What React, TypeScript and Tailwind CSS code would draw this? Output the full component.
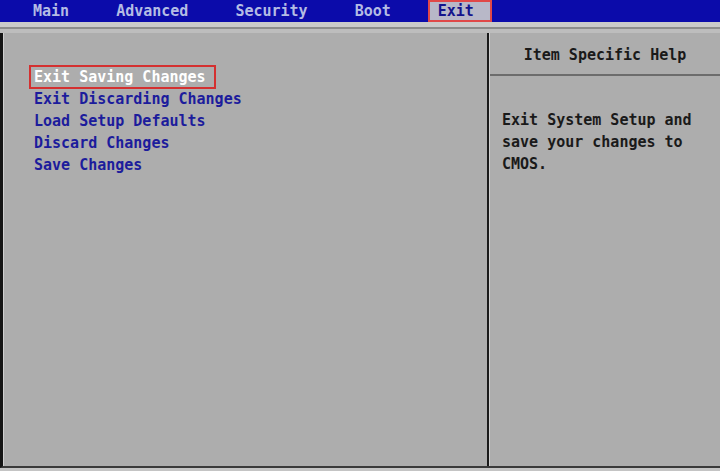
import React from 'react';

const tabs = ['Main', 'Advanced', 'Security', 'Boot', 'Exit'];

const items = [
  'Exit Saving Changes',
  'Exit Discarding Changes',
  'Load Setup Defaults',
  'Discard Changes',
  'Save Changes',
];

const mono = "font-['DejaVu_Sans_Mono','Liberation_Mono',monospace]";

export default function App() {
  const active = 'Exit';
  const selected = 0;

  return (
    <div className={`w-[720px] h-[471px] flex flex-col bg-[#adadad] overflow-hidden ${mono} text-[15px] leading-none`}>
      {/* Menu bar */}
      <div className="h-[22px] bg-[#0b0baa] flex items-stretch pl-[33px]">
        {tabs.map((t) => (
          <div
            key={t}
            className={
              t === active
                ? '-ml-[10px] w-[64px] flex items-center pl-[8px] border-2 border-[#e04848] bg-[#b8b8c8] text-[#14148c] font-bold'
                : 'mr-[47px] flex items-center text-[#b4bce4] font-bold'
            }
          >
            {t}
          </div>
        ))}
      </div>

      {/* Separator strip under the menu bar */}
      <div className="h-[5px] bg-[#cacaca]" />
      <div className="h-[2px] bg-[#8c8c8c]" />
      <div className="h-[4px] bg-[#bdbdbd]" />

      {/* Main area */}
      <div className="flex-1 flex border-l-[3px] border-l-[#151515] border-b-[2px] border-b-[#3a3a3a]">
        <div className="flex-1 flex border-l border-l-[#d0d0d0]">
          {/* Options list */}
          <div className="w-[483px] pt-[32px] pl-[25px]">
            {items.map((it, i) => (
              <div
                key={it}
                className={
                  i === selected
                    ? 'h-[24px] w-[187px] flex items-center pl-[3px] border-2 border-[#d43030] text-white font-bold -mb-[1px]'
                    : 'h-[22px] flex items-center pl-[5px] text-[#1c1c9c] font-bold'
                }
              >
                {it}
              </div>
            ))}
          </div>

          {/* Divider */}
          <div className="w-[2px] bg-[#1a1a1a]" />
          <div className="w-[1px] bg-[#cfcfcf]" />

          {/* Help panel */}
          <div className="flex-1 flex flex-col">
            <div className="h-[41px] flex items-center justify-center text-[#1a1a1a] font-bold pt-[4px]">
              Item Specific Help
            </div>
            <div className="h-[2px] bg-[#6c6c6c]" />
            <div className="pt-[33px] pl-[12px] text-[#1a1a1a] font-bold flex flex-col">
              <div className="h-[22px] flex items-center">Exit System Setup and</div>
              <div className="h-[22px] flex items-center">save your changes to</div>
              <div className="h-[22px] flex items-center">CMOS.</div>
            </div>
          </div>
        </div>
      </div>
      <div className="h-[3px] bg-[#c4c4c4]" />
    </div>
  );
}
